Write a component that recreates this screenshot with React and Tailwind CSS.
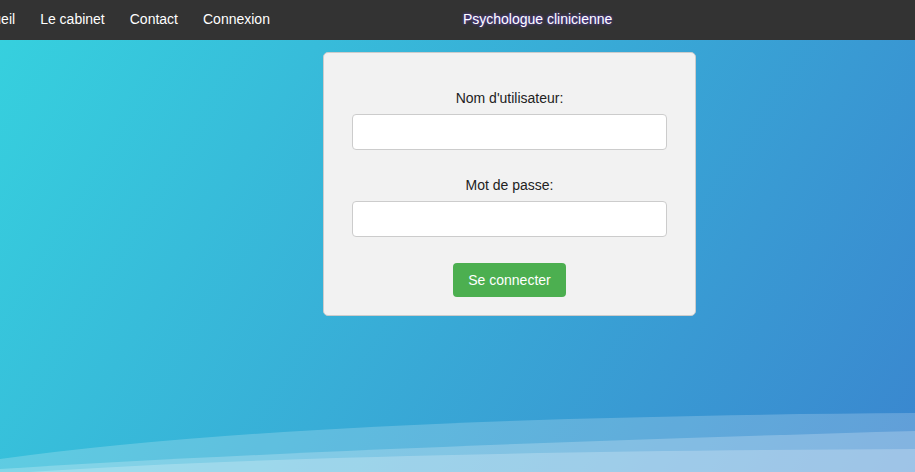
import React from "react";

const links = ["Accueil", "Le cabinet", "Contact", "Connexion"];

function Waves() {
  // vagues décoratives en bas de page
  return (
    <svg
      className="absolute bottom-0 left-0 w-full h-[60px]"
      viewBox="0 0 915 60"
      preserveAspectRatio="none"
    >
      <path d="M0 47 Q300 5 915 1 L915 60 L0 60 Z" fill="#ffffff" fillOpacity="0.2" />
      <path d="M0 57 Q350 35 915 19 L915 60 L0 60 Z" fill="#ffffff" fillOpacity="0.22" />
      <path d="M0 62 Q300 40 915 37 L915 60 L0 60 Z" fill="#ffffff" fillOpacity="0.22" />
    </svg>
  );
}

export default function App() {
  return (
    <div className="h-[472px] overflow-hidden font-['Liberation_Sans',Arial,sans-serif] text-[14px]">
      {/* barre de navigation */}
      <nav className="h-[40px] bg-[#333333] flex items-center pb-[1px] text-white">
        <ul className="flex items-center gap-[25px] ml-[-30px]">
          {links.map((l) => (
            <li key={l} className="whitespace-nowrap">
              {l}
            </li>
          ))}
        </ul>
        <div className="ml-[193px] whitespace-nowrap [text-shadow:0_0_3px_rgba(110,70,255,0.9)]">
          Psychologue clinicienne
        </div>
      </nav>

      {/* contenu */}
      <main className="relative h-[432px] bg-[linear-gradient(122deg,#36d0de_0%,#3a86cf_100%)] pt-[12px]">
        <form className="relative z-10 ml-[323px] w-[373px] bg-[#f2f2f2] border border-[#cccccc] rounded-[5px] px-[28px] pt-[37px] pb-[18px] flex flex-col items-center text-[#222]">
          <label className="block leading-[16px] mb-[8px]">Nom d'utilisateur:</label>
          <input
            type="text"
            className="w-full h-[36px] bg-white border border-[#cccccc] rounded-[4px] px-2 outline-none"
          />
          <label className="block leading-[16px] mt-[27px] mb-[8px]">Mot de passe:</label>
          <input
            type="password"
            className="w-full h-[36px] bg-white border border-[#cccccc] rounded-[4px] px-2 outline-none"
          />
          <button
            type="button"
            className="mt-[26px] h-[34px] px-[15px] bg-[#4caf50] text-white rounded-[4px] leading-[16px]"
          >
            Se connecter
          </button>
        </form>
        <Waves />
      </main>
    </div>
  );
}
